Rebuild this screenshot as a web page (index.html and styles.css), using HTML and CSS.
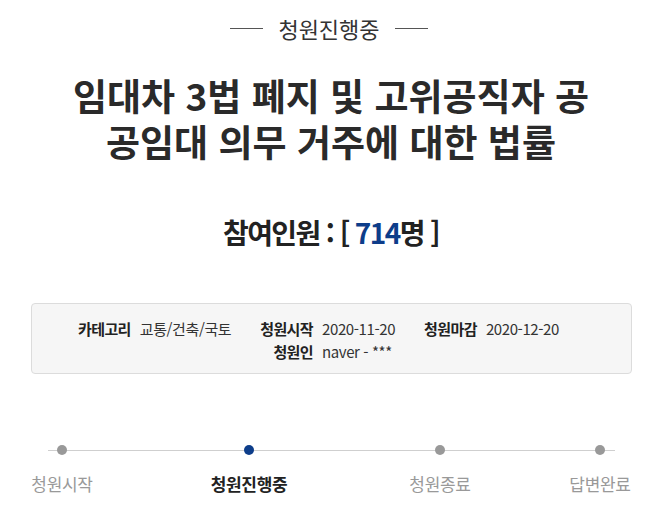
FILE: index.html
```html
<!DOCTYPE html>
<html lang="ko">
<head>
<meta charset="utf-8">
<link rel="stylesheet" href="styles.css">
</head>
<body>
<div class="page">
  <div class="status"><span class="dash"></span><span class="status-text">청원진행중</span><span class="dash"></span></div>
  <h1 class="title">임대차 3법 폐지 및 고위공직자 공공임대 의무 거주에 대한 법률</h1>
  <div class="count">참여인원 : [ <span class="num">714</span>명 ]</div>
  <div class="info">
    <div class="grid">
      <span class="lbl">카테고리</span><span class="val">교통/건축/국토</span>
      <span class="lbl">청원시작</span><span class="val">2020-11-20</span>
      <span class="lbl">청원마감</span><span class="val last">2020-12-20</span>
      <span class="lbl row2">청원인</span><span class="val row2v">naver - ***</span>
    </div>
  </div>
  <div class="steps">
    <div class="step s1"><span class="dot"></span><span class="label">청원시작</span></div>
    <div class="step s2 active"><span class="dot"></span><span class="label">청원진행중</span></div>
    <div class="step s3"><span class="dot"></span><span class="label">청원종료</span></div>
    <div class="step s4"><span class="dot"></span><span class="label">답변완료</span></div>
  </div>
</div>
</body>
</html>
```
FILE: styles.css
```css
html, body { margin: 0; padding: 0; background: #fff; }
body { font-family: "Noto Sans CJK KR", "Noto Sans", sans-serif; color: #222; }
.page { width: 658px; }
.status { display: flex; justify-content: center; align-items: center; margin-top: 13px; height: 30px; }
.dash { width: 33px; height: 1px; background: #555; }
.status-text { font-size: 22px; line-height: 30px; color: #333; margin: 0 15px; }
.title { width: 532px; margin: 29px auto 0; padding-left: 4px; font-size: 37px; line-height: 46px; font-weight: 700; text-align: center; word-break: break-all; color: #2a2a2a; }
.count { margin-top: 50px; padding-left: 4px; text-align: center; font-size: 28px; line-height: 36px; font-weight: 700; letter-spacing: -1.6px; color: #222; }
.num { color: #0d3d8a; }
.info { margin: 53px 26px 0 31px; height: 71px; box-sizing: border-box; background: #f6f6f6; border: 1px solid #dcdcdc; border-radius: 4px; padding: 13px 0 0 46px; }
.grid { display: grid; grid-template-columns: auto auto auto auto auto auto; justify-content: start; font-size: 15px; line-height: 23px; color: #333; }
.lbl { font-weight: 700; justify-self: end; margin-right: 9px; letter-spacing: -0.6px; color: #222; }
.val { margin-right: 29px; letter-spacing: -0.4px; }
.val.last { margin-right: 0; }
.row2 { grid-column: 3; }
.row2v { grid-column: 4; }
.steps { position: relative; display: flex; margin-top: 71px; padding-left: 30px; }
.steps::before { content: ""; position: absolute; left: 48px; width: 567px; top: 5px; height: 1px; background: #cfcfcf; }
.step { display: flex; flex-direction: column; align-items: center; position: relative; }
.dot { width: 10px; height: 10px; border-radius: 50%; background: #999; }
.active .dot { background: #0d3d8a; }
.label { margin-top: 17px; font-size: 17px; line-height: 24px; color: #999; letter-spacing: -0.3px; }
.active .label { color: #222; font-weight: 700; }
.s1 { width: 64px; }
.s2 { width: 80px; margin-left: 115px; }
.s3 { width: 64px; margin-left: 119px; }
.s4 { width: 64px; margin-left: 96px; }
```
